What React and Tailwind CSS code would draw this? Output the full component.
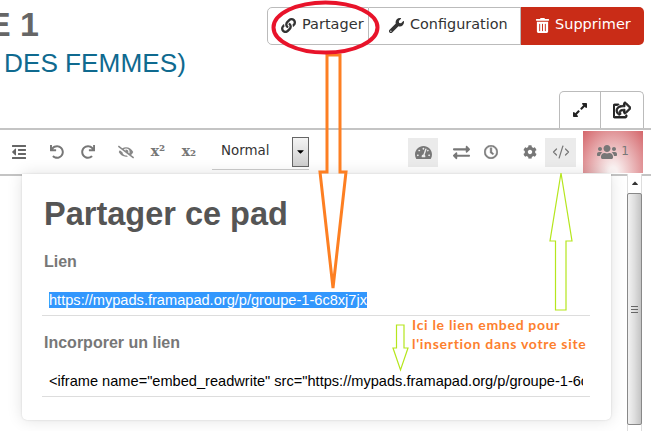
import { FaLink, FaWrench, FaTrashAlt, FaExpandAlt, FaRegShareSquare, FaOutdent, FaUndo, FaRedo, FaEyeSlash, FaTachometerAlt, FaExchangeAlt, FaRegClock, FaCog, FaUsers, FaCaretUp, FaCaretDown } from 'react-icons/fa';
import { CodeXml } from 'lucide-react';

const arial = "font-['Liberation_Sans',Arial,sans-serif]";

function Annotations() {
  return (
    <svg className="absolute left-0 top-0 pointer-events-none" width="651" height="431" fill="none">
      <polygon points="327,55 340,55 340,172 346,172 333,288 320,172 327,172" stroke="#fd7f22" strokeWidth="3" />
      <ellipse cx="325.5" cy="27.5" rx="52" ry="25" stroke="#e8132a" strokeWidth="4" />
      <polygon points="555.5,310 566,310 566,241 572,241 561,173 550,241 555.5,241" stroke="#b5e61d" strokeWidth="1.2" />
      <polygon points="396.5,325 404,325 404,348 408,348 400.5,370 393,348 396.5,348" stroke="#b5e61d" strokeWidth="1.2" />
    </svg>
  );
}

function Header() {
  return (
    <div className="h-[128px] flex justify-between shrink-0">
      <div className={arial}>
        <div className="text-[34px] font-bold leading-[40px] mt-[4px] -ml-[12px] text-[#666]">E 1</div>
        <div className="text-[26.2px] leading-[30px] mt-[4px] ml-[4px] text-[#0f6a8f]">DES FEMMES)</div>
      </div>
      <div className="w-[384px] flex flex-col items-end pr-[7px] font-['DejaVu_Sans',sans-serif] text-[14.5px]">
        <div className="mt-[7px] w-[377px] h-[38px] flex rounded-[5px]">
          <div className="w-[102px] border border-[#bbb] rounded-l-[5px] flex items-center gap-[6px] pl-[13px] pb-[2px] text-[#333]">
            <FaLink className="text-[15px]" /> Partager
          </div>
          <div className="w-[152px] border-y border-r border-[#bbb] flex items-center pl-[20px] pb-[2px] gap-[6px] text-[#333]">
            <FaWrench className="text-[15px]" /> <span className="text-[14.4px]">Configuration</span>
          </div>
          <div className="flex-1 bg-[#c92c17] rounded-r-[5px] flex items-center pl-[14px] pb-[2px] gap-[5px] text-white">
            <FaTrashAlt className="text-[15px]" /> Supprimer
          </div>
        </div>
        <div className="mt-[46px] w-[85px] h-[37px] flex border-x border-t border-[#bbb] rounded-t-[5px] text-[#222]">
          <div className="w-[41px] border-r border-[#bbb] flex items-center justify-center"><FaExpandAlt className="text-[16px]" /></div>
          <div className="flex-1 flex items-center justify-center"><FaRegShareSquare className="text-[18px]" stroke="currentColor" strokeWidth="30" /></div>
        </div>
      </div>
    </div>
  );
}

function Toolbar() {
  const slot = "flex items-center justify-center text-[#777] shrink-0";
  const script = "font-['DejaVu_Serif',serif] font-bold text-[14px] leading-none pb-[2px]";
  return (
    <div className="h-[44px] border-t-2 border-b-2 border-[#c4c4c4] flex items-center shrink-0 pr-[8px] box-content -mb-[2px]">
      <div className={`${slot} w-[38px]`}><FaOutdent className="text-[16px] text-[#666]" /></div>
      <div className={`${slot} w-[38px]`}><FaUndo className="text-[14px]" /></div>
      <div className={`${slot} w-[24px]`}><FaRedo className="text-[14px]" /></div>
      <div className={`${slot} w-[24px] ml-[14px]`}><FaEyeSlash className="text-[16px] text-[#888]" /></div>
      <div className={`${slot} ${script} w-[24px] ml-[8px]`}>x²</div>
      <div className={`${slot} ${script} w-[24px] ml-[7px]`}>x₂</div>
      <div className="w-[97px] h-[35px] ml-[11px] border-b border-[#ccc] flex items-center justify-between shrink-0 font-['DejaVu_Sans',sans-serif] text-[13.4px] text-[#333]">
        <span className="pl-[9px]">Normal</span>
        <span className="w-[17px] h-[30px] border border-[#666] bg-gradient-to-b from-[#f4f4f4] to-[#cfcfcf] flex items-center justify-center text-black"><FaCaretDown className="text-[11px]" /></span>
      </div>
      <div className={`${slot} w-[30px] h-[29px] ml-[99px] bg-[#ebebeb]`}><FaTachometerAlt className="text-[17px]" /></div>
      <div className={`${slot} w-[24px] ml-[11px]`}><FaExchangeAlt className="text-[17px]" /></div>
      <div className={`${slot} w-[24px] ml-[6px]`}><FaRegClock className="text-[14px]" stroke="currentColor" strokeWidth="20" /></div>
      <div className={`${slot} w-[24px] ml-[15px]`}><FaCog className="text-[14px]" /></div>
      <div className={`${slot} w-[31px] h-[29px] ml-[3px] bg-[#ebebeb]`}><CodeXml size={18} strokeWidth={1.6} /></div>
      <div className="w-[60px] h-[42px] ml-[7px] shrink-0 flex items-center justify-center gap-[4px] text-[#777] bg-[radial-gradient(ellipse_at_center_bottom,#faf2f2_10%,#d4656a_100%)]">
        <FaUsers className="text-[20px]" />
        <span className="font-['DejaVu_Sans',sans-serif] text-[12px] pb-[2px]">1</span>
      </div>
    </div>
  );
}

function Field({ label, children, labelClass }) {
  return (
    <>
      <div className={`text-[16px] font-bold leading-[18px] text-[#777] ${labelClass}`}>{label}</div>
      <div className="mt-[14px] h-[31px] w-[548px] -ml-[2px] border-b border-[#ddd] pl-[7px] text-[14.6px] leading-[17px] pt-[7px]">
        <div className="w-[534px] overflow-hidden whitespace-nowrap">{children}</div>
      </div>
    </>
  );
}

function Card() {
  return (
    <div className={`w-[589px] h-[246px] ml-[22px] bg-white rounded-b-[5px] shadow-[0_0_2px_rgba(0,0,0,0.15),0_0_16px_rgba(0,0,0,0.12)] pl-[22px] shrink-0 ${arial}`}>
      <h1 className="text-[32.5px] font-bold leading-[38px] pt-[21px] text-[#555] box-content">Partager ce pad</h1>
      <Field label="Lien" labelClass="mt-[20px]">
        <span className="bg-[#3297fd] text-white">https://mypads.framapad.org/p/groupe-1-6c8xj7jx</span>
      </Field>
      <Field label="Incorporer un lien" labelClass="mt-[18px]">
        <span className="text-black">&lt;iframe name="embed_readwrite" src="https://mypads.framapad.org/p/groupe-1-6c8xj7jx"</span>
      </Field>
    </div>
  );
}

function Scrollbar() {
  return (
    <div className="w-[15px] h-[258px] ml-[16px] shrink-0 bg-white flex flex-col border-x border-[#ddd]">
      <div className="h-[18px] flex items-center justify-center text-[#333]"><FaCaretUp className="text-[10px]" /></div>
      <div className="h-[232px] mt-[1px] -mx-[1px] rounded-[2px] border border-[#888] bg-gradient-to-r from-[#f2f2f2] via-[#dedede] to-[#c4c4c4] flex flex-col items-center justify-center gap-[2px]">
        <div className="w-[7px] h-[1px] bg-[#666]" />
        <div className="w-[7px] h-[1px] bg-[#666]" />
        <div className="w-[7px] h-[1px] bg-[#666]" />
      </div>
    </div>
  );
}

export default function App() {
  return (
    <div className="relative w-[651px] h-[431px] overflow-hidden bg-white flex flex-col">
      <Header />
      <Toolbar />
      <div className="flex items-start">
        <Card />
        <Scrollbar />
      </div>
      <Annotations />
      <div className="absolute left-[412px] top-[315px] font-['Lato',sans-serif] font-bold text-[14px] leading-[19px] tracking-[0.7px] text-[#fd7f2e] whitespace-nowrap">
        Ici le lien embed pour<br />l'insertion dans votre site
      </div>
    </div>
  );
}
